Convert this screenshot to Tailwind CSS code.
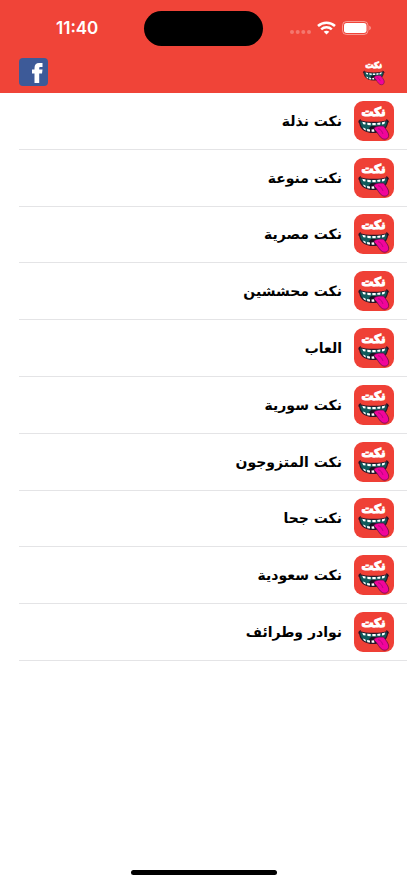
<!DOCTYPE html>
<html lang="ar">
<head>
    <meta charset="UTF-8">
    <meta name="viewport" content="width=device-width, initial-scale=1.0">
    <title>نكت</title>
    <script src="https://cdn.jsdelivr.net/npm/@tailwindcss/browser@4"></script>
</head>
<body class="min-h-screen flex flex-col bg-white font-['DejaVu_Sans','Noto_Sans',sans-serif]">
    <!-- Shared logo -->
    <svg class="hidden">
        <symbol id="logo" viewBox="0 0 40 40">
            <text x="19.500" y="14.500" text-anchor="middle" direction="rtl" font-family="DejaVu Sans, sans-serif" font-weight="bold" font-size="12" fill="#fff" stroke="#fff" stroke-width="1.100">نكت</text>
            <path d="M5.500 19.500C12 22 27 22 33.500 19.500C34 26 29 31.500 20 31.500C10.500 31.500 5.500 27.500 5.500 19.500Z" fill="#0f5b5c" stroke="#2a1426" stroke-width="1.200"/>
            <path d="M15 27.500C16.500 24 22 23.500 25 27L22 31H16.500Z" fill="#191322"/>
            <path d="M8.200 20.800L11.600 21.600L11.400 23.600L9.300 23.300ZM13.200 21.800L16.700 22.100V24.200L13.500 24ZM18.300 22.100H21.700V24.200H18.400ZM23.200 22L26.500 21.600L26.100 23.800H23.400ZM28 21.300L31.200 20.500L30.300 22.900L28 23.400Z" fill="#fff"/>
            <path d="M8.800 26.500L11.400 27.600L11.900 29.600L10 28.600ZM13 28L16 28.500V30.600L13.300 30.200ZM17.500 28.500L20 28.300L20.500 30.700H17.700Z" fill="#fff"/>
            <path d="M20 28C20 25.500 25 24.700 29.800 25.200C32 28.500 34.800 31.500 34.700 34.200C34.600 37.800 31.500 39 28.500 37.700C25 36 24 31.500 20 28Z" fill="#f0059b" stroke="#641044" stroke-width=".8"/>
            <path d="M24 27.700C27 28.200 28 30.500 29 33" fill="none" stroke="#a00572" stroke-width=".7"/>
            <path d="M4.700 21.500Q4.700 19 6.700 18.500M32.300 18.500Q34.300 19 34.700 21.500" fill="none" stroke="#2a1426" stroke-width="1"/>
        </symbol>
    </svg>

    <header class="bg-[#f04438]">
        <!-- Status bar -->
        <div class="grid grid-cols-[1fr_119px_1fr] items-center h-14">
            <span class="pl-14 text-[17px] leading-none font-semibold text-white font-['Inter',sans-serif]">11:40</span>
            <div class="h-[35px] rounded-full bg-black"></div>
            <div class="flex items-center justify-end gap-[6px] pr-9">
                <svg class="w-[21px] h-[14px]" viewBox="0 0 21 14" fill="#fff" fill-opacity=".28">
                    <circle cx="2" cy="11" r="2"/>
                    <circle cx="7.700" cy="11" r="2"/>
                    <circle cx="13.300" cy="11" r="2"/>
                    <circle cx="19" cy="11" r="2"/>
                </svg>
                <svg class="w-[19px] h-[14px]" viewBox="0 0 19 14" fill="none" stroke="#fff" stroke-width="2.500">
                    <path d="M1 5C5.800 .5 13.200 .5 18 5"/>
                    <path d="M4.200 8.300C7.200 5.500 11.800 5.500 14.800 8.300"/>
                    <path d="M6.700 10.800C8.300 9.400 10.700 9.400 12.300 10.800L9.500 13.600Z" fill="#fff" stroke="none"/>
                </svg>
                <svg class="w-[29px] h-[14px]" viewBox="0 0 29 14">
                    <rect x=".5" y=".5" width="25.500" height="13" rx="4" fill="none" stroke="#fff" stroke-opacity=".45"/>
                    <rect x="2" y="2" width="22.500" height="10" rx="2.700" fill="#fff"/>
                    <path d="M27.300 4.800C29.300 5.500 29.300 8.500 27.300 9.200Z" fill="#fff" fill-opacity=".5"/>
                </svg>
            </div>
        </div>
        <!-- Nav bar -->
        <nav class="flex items-center justify-between px-[19px] pt-[2px] pb-[7px]">
            <a href="#" aria-label="Facebook">
                <svg class="w-[29px] h-7" viewBox="0 0 29 28">
                    <rect width="29" height="28" rx="4" fill="#3d5a98"/>
                    <path d="M15.500 25V15.500H13V11.500H15.500V10C15.500 6.500 17.200 5 20 5H23.500V9H21.500C20.500 9 20.200 9.400 20.200 10.200V11.500H23.500L23 15.500H20.200V25Z" fill="#fff"/>
                </svg>
            </a>
            <svg class="w-7 h-7"><use href="#logo"/></svg>
        </nav>
    </header>

    <main>
        <ul id="categories" dir="rtl" class="grid auto-rows-fr min-h-[568px]"></ul>
    </main>

    <div class="mt-auto mx-auto mb-2 w-[146px] h-[5px] rounded-full bg-black"></div>

    <script>
        const categories = [
            'نكت نذلة',
            'نكت منوعة',
            'نكت مصرية',
            'نكت محششين',
            'العاب',
            'نكت سورية',
            'نكت المتزوجون',
            'نكت جحا',
            'نكت سعودية',
            'نوادر وطرائف'
        ];

        document.getElementById('categories').innerHTML = categories.map(name => `
            <li class="ml-[19px] border-b border-[#e4e4e6]">
                <a href="#" class="flex items-center gap-3 h-full pr-[13px]">
                    <svg class="w-10 h-10 shrink-0 rounded-[9px] bg-[#ef4036]"><use href="#logo"/></svg>
                    <span class="text-sm leading-6 font-bold text-black">${name}</span>
                </a>
            </li>
        `).join('');
    </script>
</body>
</html>
